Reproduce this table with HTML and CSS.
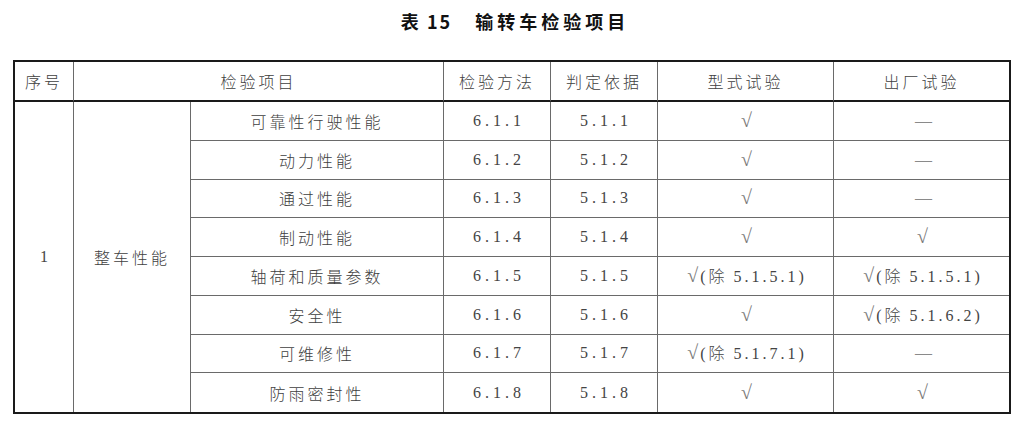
FILE: index.html
```html
<!DOCTYPE html>
<html lang="zh-CN">
<head>
<meta charset="utf-8">
<title>表 15 输转车检验项目</title>
<link rel="stylesheet" href="styles.css">
</head>
<body>
<h1 class="caption"><span class="cap-no">表 15</span><span class="cap-title">输转车检验项目</span></h1>
<table class="spec">
  <colgroup>
    <col class="c-no">
    <col class="c-grp">
    <col class="c-item">
    <col class="c-meth">
    <col class="c-basis">
    <col class="c-type">
    <col class="c-fact">
  </colgroup>
  <thead>
    <tr>
      <th>序号</th>
      <th colspan="2">检验项目</th>
      <th>检验方法</th>
      <th>判定依据</th>
      <th>型式试验</th>
      <th class="last-col">出厂试验</th>
    </tr>
  </thead>
  <tbody>
    <tr>
      <td rowspan="8" class="span num">1</td>
      <td rowspan="8" class="span">整车性能</td>
      <td>可靠性行驶性能</td>
      <td class="num">6.1.1</td>
      <td class="num">5.1.1</td>
      <td class="num"><span class="tick">√</span></td>
      <td class="num last-col"><span class="dash">—</span></td>
    </tr>
    <tr>
      <td>动力性能</td>
      <td class="num">6.1.2</td>
      <td class="num">5.1.2</td>
      <td class="num"><span class="tick">√</span></td>
      <td class="num last-col"><span class="dash">—</span></td>
    </tr>
    <tr>
      <td>通过性能</td>
      <td class="num">6.1.3</td>
      <td class="num">5.1.3</td>
      <td class="num"><span class="tick">√</span></td>
      <td class="num last-col"><span class="dash">—</span></td>
    </tr>
    <tr>
      <td>制动性能</td>
      <td class="num">6.1.4</td>
      <td class="num">5.1.4</td>
      <td class="num"><span class="tick">√</span></td>
      <td class="num last-col"><span class="tick">√</span></td>
    </tr>
    <tr>
      <td>轴荷和质量参数</td>
      <td class="num">6.1.5</td>
      <td class="num">5.1.5</td>
      <td class="num note"><span class="tick">√</span>(<span class="cjk">除</span> 5.1.5.1)</td>
      <td class="num note last-col"><span class="tick">√</span>(<span class="cjk">除</span> 5.1.5.1)</td>
    </tr>
    <tr>
      <td>安全性</td>
      <td class="num">6.1.6</td>
      <td class="num">5.1.6</td>
      <td class="num"><span class="tick">√</span></td>
      <td class="num note last-col"><span class="tick">√</span>(<span class="cjk">除</span> 5.1.6.2)</td>
    </tr>
    <tr>
      <td>可维修性</td>
      <td class="num">6.1.7</td>
      <td class="num">5.1.7</td>
      <td class="num note"><span class="tick">√</span>(<span class="cjk">除</span> 5.1.7.1)</td>
      <td class="num last-col"><span class="dash">—</span></td>
    </tr>
    <tr class="last-row">
      <td>防雨密封性</td>
      <td class="num">6.1.8</td>
      <td class="num">5.1.8</td>
      <td class="num"><span class="tick">√</span></td>
      <td class="num last-col"><span class="tick">√</span></td>
    </tr>
  </tbody>
</table>
</body>
</html>
```
FILE: styles.css
```css
html, body {
  margin: 0;
  padding: 0;
  background: #ffffff;
}

body {
  font-family: "Noto Sans CJK SC", "Noto Sans", sans-serif;
  color: #3a3a3a;
}

.caption {
  margin: 0;
  padding-top: 9px;
  height: 51px;
  line-height: 24px;
  font-size: 18px;
  font-weight: 700;
  color: #111111;
  text-align: center;
  display: flex;
  justify-content: center;
  gap: 23px;
}

.cap-no {
  letter-spacing: 2px;
}

.cap-title {
  letter-spacing: 4px;
  margin-right: -4px;
}

.spec {
  margin-left: 13px;
  width: 998px;
  border: 2px solid #1a1a1a;
  border-collapse: separate;
  border-spacing: 0;
  table-layout: fixed;
}

.c-no { width: 59px; }
.c-grp { width: 117px; }
.c-item { width: 253px; }
.c-meth { width: 107px; }
.c-basis { width: 107px; }
.c-type { width: 176px; }
.c-fact { width: 175px; }

.spec th,
.spec td {
  box-sizing: border-box;
  padding: 0;
  text-align: center;
  vertical-align: middle;
  border-right: 1px solid #6a6a6a;
  border-bottom: 1px solid #6a6a6a;
  font-size: 16px;
  font-weight: 300;
  letter-spacing: 3px;
  line-height: 20px;
  color: #404040;
}

.spec th {
  height: 40px;
  border-bottom: 2px solid #1a1a1a;
}

.spec td {
  height: 38.75px;
}

.spec .last-col {
  border-right: none;
}

.spec .span,
.spec .last-row td {
  border-bottom: none;
}

.spec .num {
  font-family: "Liberation Serif", "Noto Sans CJK SC", serif;
  font-weight: 400;
  letter-spacing: 4px;
  text-indent: 4px;
  color: #444444;
}

.spec .note {
  letter-spacing: 3px;
  text-indent: 3px;
}

.spec .tick {
  font-family: "Liberation Serif", serif;
  font-weight: 400;
  font-size: 20px;
  line-height: 20px;
  letter-spacing: 2px;
  color: #7a7a7a;
}

.spec .dash {
  font-family: "Liberation Serif", serif;
  font-size: 17px;
  letter-spacing: 0;
  color: #8a8a8a;
}

.spec .cjk {
  font-family: "Noto Sans CJK SC", sans-serif;
  font-weight: 300;
  font-size: 16px;
  letter-spacing: 2px;
}
```
